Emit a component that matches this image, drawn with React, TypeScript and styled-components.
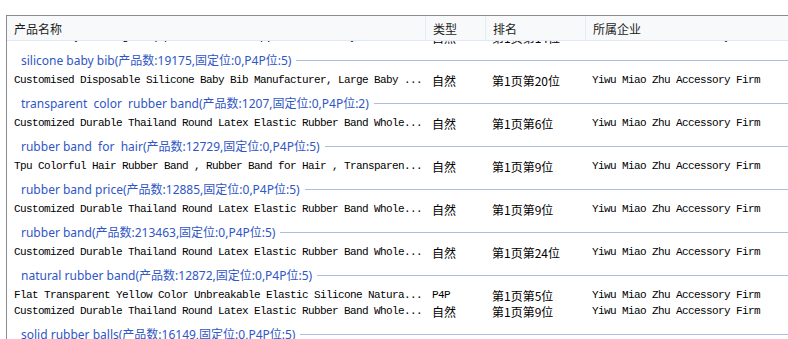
import React from "react";
import styled, { createGlobalStyle } from "styled-components";

const Global = createGlobalStyle`
  html, body { margin: 0; padding: 0; background: #fff; overflow: hidden; }
  body { width: 788px; height: 339px; }
`;

const Panel = styled.div`
  margin: 15px 0 0 6px;
  width: 820px;
  height: 324px;
  border-top: 1px solid #8c8c8c;
  border-left: 1px solid #8c8c8c;
  display: flex;
  flex-direction: column;
  background: #fff;
`;

const Cols = `grid-template-columns: 418px 60px 100px 1fr;`;

const Header = styled.div`
  display: grid;
  ${Cols}
  height: 24px;
  background: #f8f9fb;
  border-bottom: 1px solid #e1e9f6;
  flex: none;
`;

const HeadCell = styled.div<{ $sep?: boolean }>`
  display: flex;
  align-items: center;
  padding-left: 7px;
  font-family: "Noto Sans CJK SC", sans-serif;
  font-size: 12px;
  color: #1c1c1c;
  border-left: ${(p) => (p.$sep ? "1px solid #e6ecf5" : "none")};
`;

const Body = styled.div`
  flex: 1;
  overflow: hidden;
`;

const List = styled.div`
  margin-top: -12px;
`;

const GroupRow = styled.div`
  height: 27px;
  box-sizing: border-box;
  padding: 3px 0 0 14px;
  display: flex;
  align-items: center;
`;

const GroupText = styled.span`
  font-family: "Noto Sans", "Noto Sans CJK SC", sans-serif;
  font-size: 12px;
  color: #2f56c6;
  white-space: pre;
`;

const GroupLine = styled.div`
  flex: 1;
  height: 1px;
  margin-left: 5px;
  background: #aebde2;
`;

const ProductRow = styled.div`
  display: grid;
  ${Cols}
  height: 16px;
  box-sizing: border-box;
  padding-top: 1px;
  align-items: center;
`;

const Cell = styled.div<{ $cjk?: boolean }>`
  padding-left: 7px;
  white-space: pre;
  overflow: hidden;
  color: #000;
  font-family: ${(p) =>
    p.$cjk
      ? `"Noto Sans CJK SC", sans-serif`
      : `"Liberation Mono", "Noto Sans CJK SC", monospace`};
  font-size: ${(p) => (p.$cjk ? "12px" : "11px")};
  letter-spacing: ${(p) => (p.$cjk ? "0" : "-0.6px")};
  line-height: 15px;
`;

type Product = { name: string; type: string; rank: string; firm: string };
type Group = { title: string; products: Product[] };

const FIRM = "Yiwu Miao Zhu Accessory Firm";
const DURABLE =
  "Customized Durable Thailand Round Latex Elastic Rubber Band Whole...";

const leading: Product = {
  name: "Custom Baby Feeding Set(Spoon Bowl Bib Cup) Silicone Baby Bib ...",
  type: "自然",
  rank: "第1页第14位",
  firm: FIRM,
};

const groups: Group[] = [
  {
    title: "silicone baby bib(产品数:19175,固定位:0,P4P位:5)",
    products: [
      {
        name: "Customised Disposable Silicone Baby Bib Manufacturer, Large Baby ...",
        type: "自然",
        rank: "第1页第20位",
        firm: FIRM,
      },
    ],
  },
  {
    title: "transparent  color  rubber band(产品数:1207,固定位:0,P4P位:2)",
    products: [{ name: DURABLE, type: "自然", rank: "第1页第6位", firm: FIRM }],
  },
  {
    title: "rubber band  for  hair(产品数:12729,固定位:0,P4P位:5)",
    products: [
      {
        name: "Tpu Colorful Hair Rubber Band , Rubber Band for Hair , Transparen...",
        type: "自然",
        rank: "第1页第9位",
        firm: FIRM,
      },
    ],
  },
  {
    title: "rubber band price(产品数:12885,固定位:0,P4P位:5)",
    products: [{ name: DURABLE, type: "自然", rank: "第1页第9位", firm: FIRM }],
  },
  {
    title: "rubber band(产品数:213463,固定位:0,P4P位:5)",
    products: [{ name: DURABLE, type: "自然", rank: "第1页第24位", firm: FIRM }],
  },
  {
    title: "natural rubber band(产品数:12872,固定位:0,P4P位:5)",
    products: [
      {
        name: "Flat Transparent Yellow Color Unbreakable Elastic Silicone Natura...",
        type: "P4P",
        rank: "第1页第5位",
        firm: FIRM,
      },
      { name: DURABLE, type: "自然", rank: "第1页第9位", firm: FIRM },
    ],
  },
  {
    title: "solid rubber balls(产品数:16149,固定位:0,P4P位:5)",
    products: [],
  },
];

function Row({ p }: { p: Product }) {
  return (
    <ProductRow>
      <Cell>{p.name}</Cell>
      <Cell $cjk={p.type !== "P4P"}>{p.type}</Cell>
      <Cell $cjk>{p.rank}</Cell>
      <Cell>{p.firm}</Cell>
    </ProductRow>
  );
}

export default function App() {
  return (
    <>
      <Global />
      <Panel>
        <Header>
          <HeadCell>产品名称</HeadCell>
          <HeadCell $sep>类型</HeadCell>
          <HeadCell $sep>排名</HeadCell>
          <HeadCell $sep>所属企业</HeadCell>
        </Header>
        <Body>
          <List>
            <Row p={leading} />
            {groups.map((g) => (
              <React.Fragment key={g.title}>
                <GroupRow>
                  <GroupText>{g.title}</GroupText>
                  <GroupLine />
                </GroupRow>
                {g.products.map((p, i) => (
                  <Row key={i} p={p} />
                ))}
              </React.Fragment>
            ))}
          </List>
        </Body>
      </Panel>
    </>
  );
}
